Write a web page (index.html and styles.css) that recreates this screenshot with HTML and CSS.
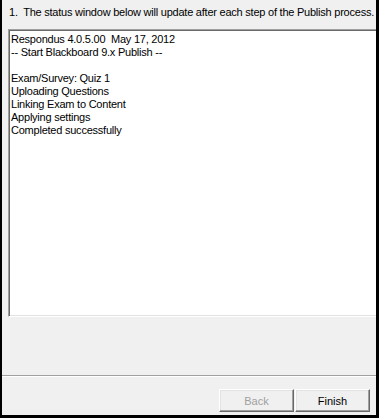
FILE: index.html
```html
<!DOCTYPE html>
<html>
<head>
<meta charset="utf-8">
<link rel="stylesheet" href="styles.css">
</head>
<body>
<div class="window">
  <div class="header">1.&nbsp; The status window below will update after each step of the Publish process.</div>
  <div class="status">
    <div class="line">Respondus 4.0.5.00&nbsp; May 17, 2012</div>
    <div class="line">-- Start Blackboard 9.x Publish --</div>
    <div class="line">&nbsp;</div>
    <div class="line">Exam/Survey: Quiz 1</div>
    <div class="line">Uploading Questions</div>
    <div class="line">Linking Exam to Content</div>
    <div class="line">Applying settings</div>
    <div class="line">Completed successfully</div>
  </div>
  <div class="spacer"></div>
  <div class="separator"></div>
  <div class="buttons">
    <div class="btn disabled">Back</div>
    <div class="btn">Finish</div>
  </div>
</div>
</body>
</html>
```
FILE: styles.css
```css
html, body {
  margin: 0;
  padding: 0;
  background: #000;
  width: 379px;
  height: 418px;
  overflow: hidden;
}
.window {
  margin-left: 2px;
  width: 374px;
  height: 415px;
  background: #f0f0f0;
  display: flex;
  flex-direction: column;
  overflow: hidden;
  font-family: "Liberation Sans", Arial, sans-serif;
  font-size: 11px;
  letter-spacing: -0.23px;
  color: #000;
}
.header {
  padding: 6px 0 0 7px;
  height: 17px;
  line-height: 12px;
  white-space: nowrap;
}
.status {
  margin: 6px 0 0 6px;
  width: 370px;
  height: 288px;
  box-sizing: border-box;
  background: #fff;
  border-top: 1px solid #a0a0a0;
  border-left: 1px solid #a0a0a0;
  border-bottom: 1px solid #fff;
  box-shadow: inset 1px 1px 0 #696969, inset 0 -1px 0 #e3e3e3;
  padding: 3px 0 0 2px;
  line-height: 13px;
  white-space: nowrap;
}
.spacer {
  height: 58px;
}
.separator {
  height: 1px;
  background: #a0a0a0;
  border-bottom: 1px solid #fff;
}
.buttons {
  display: flex;
  gap: 1px;
  margin: 12px 0 0 217px;
}
.btn {
  width: 75px;
  height: 23px;
  box-sizing: border-box;
  background: #f0f0f0;
  border-top: 1px solid #fff;
  border-left: 1px solid #fff;
  border-right: 1px solid #696969;
  border-bottom: 1px solid #696969;
  box-shadow: inset -1px -1px 0 #a0a0a0, inset 1px 1px 0 #e3e3e3;
  display: flex;
  align-items: center;
  justify-content: center;
  font-size: 11px;
  letter-spacing: 0;
}
.btn.disabled {
  color: #a0a0a0;
}
```
